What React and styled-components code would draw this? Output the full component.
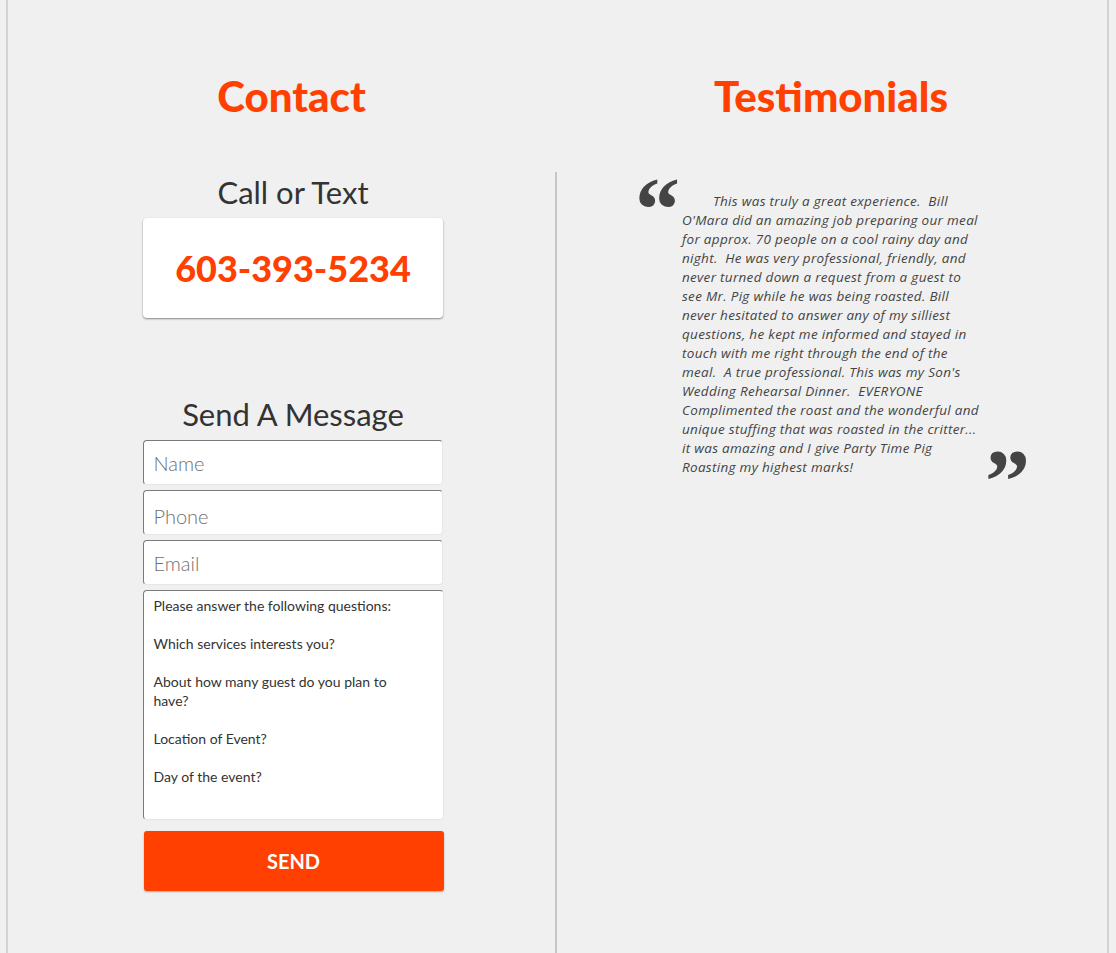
import React from "react";
import styled, { createGlobalStyle } from "styled-components";

const ORANGE = "#ff4000";

const GlobalStyle = createGlobalStyle`
  html, body {
    margin: 0;
    padding: 0;
    background-color: #f0f0f0;
    font-family: "Lato", "Open Sans", sans-serif;
  }
`;

const Frame = styled.div`
  margin: 0 7px 0 6px;
  min-height: 953px;
  border-left: 2px solid #d2d2d2;
  border-right: 2px solid #d2d2d2;
  display: grid;
  grid-template-columns: 547px 1fr;
  grid-template-rows: 172px 1fr;
`;

const Heading = styled.h2`
  margin: 0;
  padding: ${props => (props.left ? "72px 0 0 20px" : "72px 0 0 0")};
  box-sizing: border-box;
  text-align: center;
  font-size: 42px;
  font-weight: 900;
  line-height: 48px;
  color: ${ORANGE};
`;

const ContactBody = styled.div`
  padding-left: 23px;
  display: flex;
  flex-direction: column;
  align-items: center;
`;

const SubHeading = styled.h3`
  margin: ${props => props.top || "0"} 0 0 0;
  font-size: 31px;
  font-weight: 400;
  line-height: 40px;
  color: #333333;
`;

const PhoneCard = styled.div`
  width: 300px;
  height: 100px;
  margin-top: 6px;
  box-sizing: border-box;
  background-color: #ffffff;
  border-radius: 4px;
  box-shadow: 0 1px 2px rgba(0, 0, 0, 0.45);
  display: flex;
  align-items: center;
  justify-content: center;
  font-size: 36px;
  font-weight: 900;
  color: ${ORANGE};
`;

const Form = styled.form`
  width: 301px;
  margin-top: 6px;
  display: flex;
  flex-direction: column;
  gap: 5px;
`;

const Field = styled.input`
  width: 300px;
  height: 45px;
  box-sizing: border-box;
  padding: ${props => (props.low ? "6px 10px 0" : "0 10px")};
  border: 1px solid #e6e6e6;
  border-top-color: #7a7a7a;
  border-left-color: #7a7a7a;
  border-radius: 4px;
  background-color: #ffffff;
  font-family: "Lato", sans-serif;
  font-size: 20px;
  outline: none;

  &::placeholder {
    color: #707070;
    font-weight: 300;
  }
`;

const Questions = styled.textarea`
  width: 301px;
  height: 230px;
  box-sizing: border-box;
  padding: 5px 30px 6px 10px;
  border: 1px solid #e6e6e6;
  border-top-color: #7a7a7a;
  border-left-color: #7a7a7a;
  border-radius: 4px;
  background-color: #ffffff;
  font-family: "Lato", sans-serif;
  font-size: 14px;
  line-height: 19px;
  color: #333333;
  resize: none;
  outline: none;
`;

const SendButton = styled.button`
  width: 300px;
  height: 60px;
  margin: 6px 0 0 1px;
  border: none;
  border-radius: 3px;
  background-color: ${ORANGE};
  box-shadow: 0 1px 2px rgba(0, 0, 0, 0.3);
  color: #ffffff;
  font-family: "Lato", sans-serif;
  font-size: 20px;
  font-weight: 700;
  cursor: pointer;
`;

const TestimonialBody = styled.div`
  border-left: 2px solid #c6c6c6;
  padding: 8px 0 0 81px;
`;

const Quote = styled.blockquote`
  margin: 0;
  display: flex;
  align-items: flex-start;
`;

const QuoteMark = styled.span`
  flex: none;
  width: 40px;
  height: ${props => (props.close ? "40px" : "50px")};
  font-family: "Liberation Serif", serif;
  font-weight: 700;
  font-size: 90px;
  line-height: 76px;
  color: #444444;
  align-self: ${props => (props.close ? "flex-end" : "flex-start")};
  margin: ${props => (props.close ? "0 0 -7px 1px" : "-8px 7px 0 -3px")};
`;

const QuoteText = styled.p`
  margin: 12px 0 0 0;
  width: 302px;
  text-indent: 31px;
  font-family: "Open Sans", sans-serif;
  font-size: 13.5px;
  font-style: italic;
  letter-spacing: 0.3px;
  line-height: 19px;
  color: #444444;
`;

const questionsText = `Please answer the following questions:

Which services interests you?

About how many guest do you plan to have?

Location of Event?

Day of the event?`;

export default function App() {
  return (
    <>
      <GlobalStyle />
      <Frame>
        <Heading left>Contact</Heading>
        <Heading>Testimonials</Heading>
        <ContactBody>
          <SubHeading>Call or Text</SubHeading>
          <PhoneCard>603-393-5234</PhoneCard>
          <SubHeading top="76px">Send A Message</SubHeading>
          <Form onSubmit={e => e.preventDefault()}>
            <Field placeholder="Name" />
            <Field placeholder="Phone" low />
            <Field placeholder="Email" />
            <Questions defaultValue={questionsText} />
            <SendButton type="submit">SEND</SendButton>
          </Form>
        </ContactBody>
        <TestimonialBody>
          <Quote>
            <QuoteMark>“</QuoteMark>
            <QuoteText>
              This was truly a great experience.&nbsp; Bill O'Mara did an
              amazing job preparing our meal for approx. 70 people on a cool
              rainy day and night.&nbsp; He was very professional, friendly,
              and never turned down a request from a guest to see Mr. Pig while
              he was being roasted. Bill never hesitated to answer any of my
              silliest questions, he kept me informed and stayed in touch with
              me right through the end of the meal.&nbsp; A true professional.
              This was my Son's Wedding Rehearsal Dinner.&nbsp; EVERYONE
              Complimented the roast and the wonderful and unique stuffing that
              was roasted in the critter... it was amazing and I give Party Time
              Pig Roasting my highest marks!
            </QuoteText>
            <QuoteMark close>”</QuoteMark>
          </Quote>
        </TestimonialBody>
      </Frame>
    </>
  );
}
